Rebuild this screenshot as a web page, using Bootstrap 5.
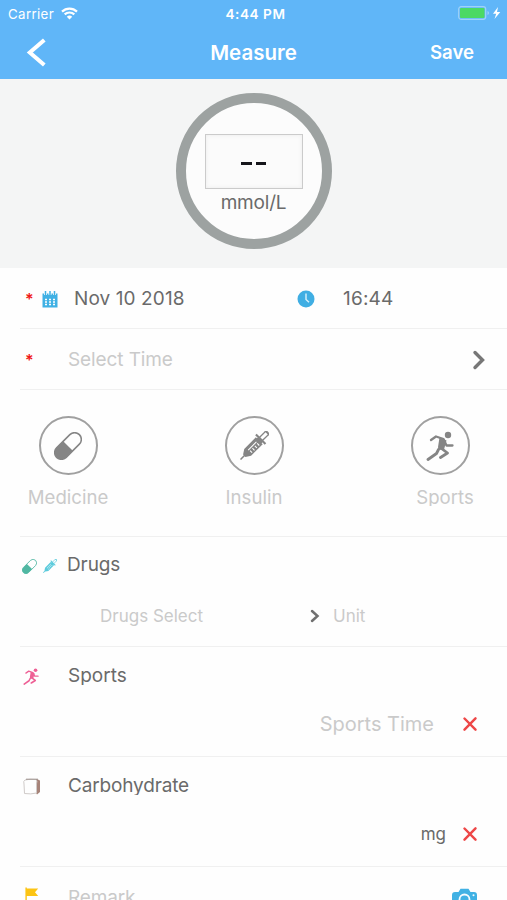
<!DOCTYPE html>
<html lang="en">
<head>
<meta charset="utf-8">
<meta name="viewport" content="width=device-width, initial-scale=1">
<title>Measure</title>
<link href="https://cdn.jsdelivr.net/npm/bootstrap@5.3.0/dist/css/bootstrap.min.css" rel="stylesheet">
<style>
html, body { height: 900px; overflow: hidden; }
body { font-family: Inter, "Liberation Sans", sans-serif; background: #fefefe; color: #6a6a6a; font-size: 19px; line-height: 24px; white-space: nowrap; }
svg { display: block; flex: none; overflow: visible; }
.topbar { height: 79px; background: #60b6f8; color: #fff; box-shadow: 0 1px 0 #c9e6fa; }
.status { height: 28px; font-size: 13.3px; padding: 0 5px 0 8px; line-height: 28px; }
.status > div { flex: 1 1 0; }
.status .carrier { letter-spacing: .35px; }
.status .clock { font-size: 13.6px; letter-spacing: .55px; padding-left: 1px; }
.titlebar { height: 51px; padding: 0 33px 0 27px; line-height: 49px; font-size: 20.5px; }
.titlebar > div { flex: 1 1 0; }
.titlebar .heading { padding-left: 6px; }
.titlebar .action { font-size: 18.6px; }
.gauge { height: 189px; background: #f4f5f5; padding-top: 14px; }
.dial { width: 156px; height: 156px; border: 10px solid #9da2a1; background: #fcfcfc; padding-top: 31px; }
.reading { width: 98px; height: 55px; border: 1px solid #cbcbcb; box-shadow: inset 0 0 4px #ececec; background: #fbfbfb; padding-top: 3px; }
.unit { font-size: 19px; letter-spacing: -.2px; margin-top: 2px; }
.dash { width: 10.5px; height: 3px; background: #15151a; }
.line { margin-left: 20px; border-bottom: 1px solid #f0f0f0; }
.h61 { height: 61px; padding-top: 2px; }
.h110 { height: 110px; }
.faint { color: #cacaca; }
.req { width: 21px; padding-left: 5px; color: #f01818; font-size: 16px; font-weight: 600; height: 24px; line-height: 24px; }
.ring { width: 59px; height: 59px; border: 2px solid #a0a0a0; color: #858585; }
.kind { width: 100px; }
.kind span { margin-top: 10px; font-size: 18.6px; }
.slot { width: 48px; }
.cropped { clip-path: inset(0 -4px 3px -4px); }
</style>
</head>
<body>
<svg width="0" height="0" class="position-absolute" aria-hidden="true">
  <defs>
    <symbol id="runner" viewBox="0 0 28 30">
      <circle cx="22" cy="4" r="3.200" fill="currentColor"/>
      <path d="M5 9 10 5.500 17.500 8 20.500 14.500H26.500" fill="none" stroke="currentColor" stroke-width="2.300" stroke-linecap="round" stroke-linejoin="round"/>
      <path d="M13.500 6.500 20.500 9.500 18 18.500 12.500 19 12 16Z" fill="currentColor"/>
      <path d="M15.500 17.500 21.500 22 14.500 26.500M12.500 18.500 10.500 22.500 2 28.500" fill="none" stroke="currentColor" stroke-width="2.800" stroke-linecap="round" stroke-linejoin="round"/>
    </symbol>
    <symbol id="pill" viewBox="1.500 1.500 27 27">
      <g transform="rotate(45 15 15)">
        <rect x="8.500" y="-.5" width="13" height="31" rx="6.500" fill="none" stroke="currentColor" stroke-width="1.500"/>
        <path d="M8.500 15H21.500V24A6.500 6.500 0 0 1 8.500 24Z" fill="currentColor"/>
      </g>
    </symbol>
    <symbol id="syringe" viewBox="0 0 30 30">
      <g transform="rotate(45 15 15)" fill="currentColor">
        <path d="M14.200 29H15.800V35.500H14.200ZM10 8H20V25L16.700 30H13.300L10 25ZM8 4.800H22V7H8ZM11.500 6H18.500V9H11.500Z"/>
        <path d="M12.800 -3.500V6M17.200 -3.500V6" stroke="currentColor" stroke-width="1.400"/>
        <path d="M10.500 -5H19.500V-2.800H10.500Z"/>
        <path d="M15.500 11.500H18.500M15.500 15H18.500M15.500 18.500H18.500M15.500 22H18.500M13.800 11V23" stroke="#fff" stroke-width="1.100"/>
      </g>
    </symbol>
    <symbol id="cross" viewBox="0 0 14 14">
      <path d="M1.500 1.500 12.500 12.700M12.500 1.300 1.500 12.700" fill="none" stroke="#ee4747" stroke-width="2.400" stroke-linecap="round"/>
    </symbol>
  </defs>
</svg>

<header class="topbar">
  <div class="status d-flex">
    <div class="d-flex align-items-center">
      <span class="carrier">Carrier</span>
      <svg style="margin:-2px 0 0 7px" width="17" height="13" viewBox="0 0 17 13" fill="none" stroke="#fff" stroke-width="2.200">
        <path d="M1 4.600A10.800 10.800 0 0 1 16 4.600M3.700 7.400A7 7 0 0 1 13.300 7.400"/>
        <path d="M5.800 9.700A4 4 0 0 1 11.200 9.700L8.500 12.500Z" fill="#fff" stroke="none"/>
      </svg>
    </div>
    <div class="clock text-center fw-semibold">4:44 PM</div>
    <div class="d-flex align-items-center justify-content-end">
      <svg style="margin-top:-2px" width="44" height="14" viewBox="0 0 44 14">
        <rect x=".7" y=".7" width="27" height="12.600" rx="2.500" fill="none" stroke="#9fd3f8" stroke-width="1.200"/>
        <rect x="2" y="2" width="24.500" height="10" rx="1" fill="#4bd964"/>
        <path d="M29.500 5V9Q31 8.500 31 7T29.500 5Z" fill="#9fd3f8"/>
        <path d="M40 1 35 7.700H38.200L36.500 13 42.300 6H39Z" fill="#fff"/>
      </svg>
    </div>
  </div>
  <div class="titlebar d-flex">
    <div><svg style="margin-top:11px" width="19" height="27" viewBox="0 0 19 27"><path d="M17.300 1 2.800 13.500 17.300 26" fill="none" stroke="#fff" stroke-width="4"/></svg></div>
    <div class="heading text-center fw-semibold">Measure</div>
    <div class="action text-end fw-semibold">Save</div>
  </div>
</header>

<section class="gauge">
  <div class="dial rounded-circle mx-auto d-flex flex-column align-items-center">
    <div class="reading d-flex align-items-center justify-content-center gap-1 flex-shrink-0">
      <div class="dash"></div><div class="dash"></div>
    </div>
    <span class="unit">mmol/L</span>
  </div>
</section>

<main>
  <div class="line h61 d-flex align-items-center">
    <div class="req">*</div>
    <svg width="18" height="17" viewBox="0 0 18 17">
      <path d="M1.500 2.500H16.500V16.500H1.500Z" fill="#40b1e4"/>
      <path d="M4.500 0V4M9 0V4M13.500 0V4" stroke="#fefefe" stroke-width="3"/>
      <path d="M4.500 0V4M9 0V4M13.500 0V4" stroke="#40b1e4" stroke-width="1.500"/>
      <path d="M4 8.500H6M8 8.500H10M12 8.500H14M4 11H6M8 11H10M12 11H14M4 13.500H6M8 13.500H10M12 13.500H14" stroke="#fefefe" stroke-width="1.400"/>
    </svg>
    <span style="width:238px;padding-left:15px;letter-spacing:.1px">Nov 10 2018</span>
    <svg width="18" height="18" viewBox="0 0 18 18">
      <circle cx="9" cy="9" r="8.500" fill="#40aee3"/><path d="M9 3.500V9.500L12 12.300" stroke="#d9f1fb" stroke-width="1.400" fill="none"/>
    </svg>
    <span style="padding-left:28px;letter-spacing:.2px">16:44</span>
  </div>
  <div class="line h61 d-flex align-items-center">
    <div class="req">*</div>
    <span class="faint flex-grow-1" style="padding-left:27px;letter-spacing:-.1px">Select Time</span>
    <svg width="34" height="20" viewBox="0 0 34 20"><path d="M2 2.500 9.500 10 2 17.500" fill="none" stroke="#777" stroke-width="3.400" stroke-linecap="round"/></svg>
  </div>

  <div class="line d-flex justify-content-between" style="height:147px;padding:26px 12px 0 0">
    <div class="kind d-flex flex-column align-items-center" style="margin-left:-2px">
      <div class="ring rounded-circle d-flex align-items-center justify-content-center"><svg width="28" height="28"><use href="#pill"/></svg></div>
      <span class="faint">Medicine</span>
    </div>
    <div class="kind d-flex flex-column align-items-center" style="margin-left:-5px">
      <div class="ring rounded-circle d-flex align-items-center justify-content-center"><svg width="29" height="29"><use href="#syringe"/></svg></div>
      <span class="faint">Insulin</span>
    </div>
    <div class="kind d-flex flex-column align-items-center">
      <div class="ring rounded-circle d-flex align-items-center justify-content-center" style="margin-right:10px"><svg width="28" height="30"><use href="#runner"/></svg></div>
      <span class="faint cropped">Sports</span>
    </div>
  </div>

  <div class="line h110">
    <div class="d-flex align-items-center" style="padding-top:16px">
      <div class="slot d-flex align-items-center" style="width:47px">
        <svg style="margin:3px 0 0 2px" width="15" height="15" color="#50b7a2"><use href="#pill"/></svg>
        <svg style="margin:2px 0 0 6px" width="14" height="14" color="#5ccbdc"><use href="#syringe"/></svg>
      </div>
      <span style="letter-spacing:-.1px">Drugs</span>
    </div>
    <div class="d-flex align-items-center faint" style="padding:27px 0 0 80px;font-size:17px">
      <span style="width:210px">Drugs Select</span>
      <svg width="23" height="14" viewBox="0 0 23 14"><path d="M2 2 7.500 7 2 12" fill="none" stroke="#707070" stroke-width="2.500" stroke-linecap="round"/></svg>
      <span>Unit</span>
    </div>
  </div>

  <div class="line h110">
    <div class="d-flex align-items-center" style="padding-top:17px">
      <div class="slot"><svg style="margin:1px 0 0 3px" width="16" height="17" color="#ee6095"><use href="#runner"/></svg></div>
      <span class="cropped">Sports</span>
    </div>
    <div class="d-flex align-items-center justify-content-end" style="padding:24px 30px 0 0">
      <span class="faint" style="padding-right:29px;font-size:20px">Sports Time</span>
      <svg width="14" height="14"><use href="#cross"/></svg>
    </div>
  </div>

  <div class="line h110">
    <div class="d-flex align-items-center" style="padding-top:17px">
      <div class="slot"><svg style="margin-left:3px" width="18" height="17" viewBox="0 0 18 17">
        <path d="M3 1H14L17 2.500V14L14 16.500 13 15Z" fill="#a78479"/>
        <path d="M2 2Q7 .8 13 1.500 14.500 3 13.500 6V15Q8 16.500 1.500 15.500L1 6Q0 3 2 2Z" fill="#fefefe" stroke="#d0cbc9"/>
        <path d="M3 1.200H15" stroke="#a09592"/>
      </svg></div>
      <span class="cropped" style="letter-spacing:-.15px">Carbohydrate</span>
    </div>
    <div class="d-flex align-items-center justify-content-end" style="padding:24px 30px 0 0">
      <span style="padding-right:17px;font-size:17px">mg</span>
      <svg width="14" height="14"><use href="#cross"/></svg>
    </div>
  </div>

  <div class="line d-flex" style="padding-top:20px">
    <div class="slot"><svg style="margin-left:5px" width="14" height="20" viewBox="0 0 14 20"><path d="M.4 .5V20H1.800V9H13.200L10 5.300 13.200 1.500H1.800V.5Z" fill="#fcc414"/></svg></div>
    <span class="faint flex-grow-1" style="margin-top:-1px;letter-spacing:-.15px">Remark</span>
    <svg style="margin-right:30px;margin-top:1px" width="25" height="22" viewBox="0 0 25 22">
      <path d="M3 4H6.500L8.500 .8H16.500L18.500 4H22Q25 4 25 7V19Q25 21.500 22 21.500H3Q0 21.500 0 19V7Q0 4 3 4Z" fill="#40b1e4"/>
      <circle cx="12.500" cy="11.500" r="5" fill="none" stroke="#f3fbff" stroke-width="1.800"/><circle cx="21.500" cy="7.300" r="1" fill="#f3fbff"/>
    </svg>
  </div>
</main>
<script src="https://cdn.jsdelivr.net/npm/bootstrap@5.3.0/dist/js/bootstrap.bundle.min.js"></script>
</body>
</html>
